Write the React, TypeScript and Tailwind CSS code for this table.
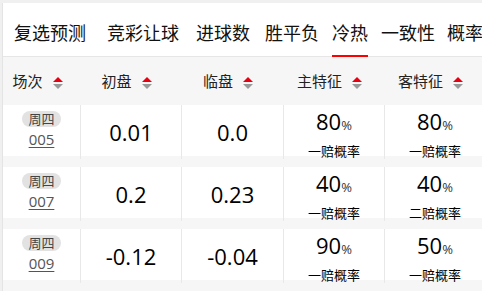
const tabs = [
  { label: "复选预测", ml: "ml-[11px]" },
  { label: "竞彩让球", ml: "ml-[21px]" },
  { label: "进球数", ml: "ml-[17px]" },
  { label: "胜平负", ml: "ml-[15px]" },
  { label: "冷热", ml: "ml-[13px]", active: true },
  { label: "一致性", ml: "ml-[13px]" },
  { label: "概率", ml: "ml-[12px]" },
];

const heads = ["场次", "初盘", "临盘", "主特征", "客特征"];

const rows = [
  { no: "005", a: "0.01", b: "0.0", h: "80", hl: "一赔概率", g: "80", gl: "一赔概率" },
  { no: "007", a: "0.2", b: "0.23", h: "40", hl: "一赔概率", g: "40", gl: "二赔概率" },
  { no: "009", a: "-0.12", b: "-0.04", h: "90", hl: "一赔概率", g: "50", gl: "一赔概率" },
];

const cols = "grid grid-cols-[77px_101px_102px_101px_101px]";

function SortIcon() {
  return (
    <svg width="10" height="13" viewBox="0 0 10 13" className="ml-[10px] mr-[8px] mt-[4px] shrink-0">
      <polygon points="5,0 10,5 0,5" fill="#e60012" />
      <polygon points="0,7 10,7 5,12" fill="#999" />
    </svg>
  );
}

function Feature({ v, label }: { v: string; label: string }) {
  return (
    <div className="flex flex-col items-center border-l border-[#e8e8e8] pt-[4px]">
      <div className="leading-[24px] text-[22px] text-black">
        {v}
        <span className="text-[13px] text-[#333]">%</span>
      </div>
      <div className="mt-[6px] leading-[16px] text-[13px] text-black">{label}</div>
    </div>
  );
}

export default function App() {
  return (
    <div
      className="w-[482px] h-[291px] overflow-hidden bg-[#f0f0f0] pt-[3px]"
      style={{ fontFamily: '"Open Sans", "Noto Sans CJK SC", sans-serif' }}
    >
      <div className="ml-[2px] h-[288px] border-l border-[#e4e4e4] bg-[#f6f6f6]">
        <div className="flex h-[54px] whitespace-nowrap border-b border-[#e6e6e6] bg-white">
          {tabs.map((t) => (
            <div key={t.label} className={`relative flex items-center pt-[7px] text-[18px] text-[#111] ${t.ml}`}>
              {t.label}
              {t.active && <div className="absolute bottom-[-1px] left-0 right-0 h-[2px] bg-[#f00]" />}
            </div>
          ))}
        </div>

        <div className={`${cols} h-[48px]`}>
          {heads.map((h) => (
            <div key={h} className="flex items-center justify-center text-[15px] text-[#222]">
              <span>{h}</span>
              <SortIcon />
            </div>
          ))}
        </div>

        <div className="flex flex-col gap-[11px]">
          {rows.map((r) => (
            <div key={r.no} className={`${cols} h-[51px] bg-white`}>
              <div className="flex flex-col items-center pt-[6px]">
                <span className="rounded-full bg-[#e2e2e2] px-[6px] text-[13px] leading-[16px] text-[#444]">周四</span>
                <span className="mt-[2px] text-[15px] leading-[20px] text-[#555] underline underline-offset-[2px]">{r.no}</span>
              </div>
              <div className="flex items-center justify-center border-l border-[#e8e8e8] text-[22px] text-black">{r.a}</div>
              <div className="flex items-center justify-center border-l border-[#e8e8e8] text-[22px] text-black">{r.b}</div>
              <Feature v={r.h} label={r.hl} />
              <Feature v={r.g} label={r.gl} />
            </div>
          ))}
        </div>
      </div>
    </div>
  );
}
